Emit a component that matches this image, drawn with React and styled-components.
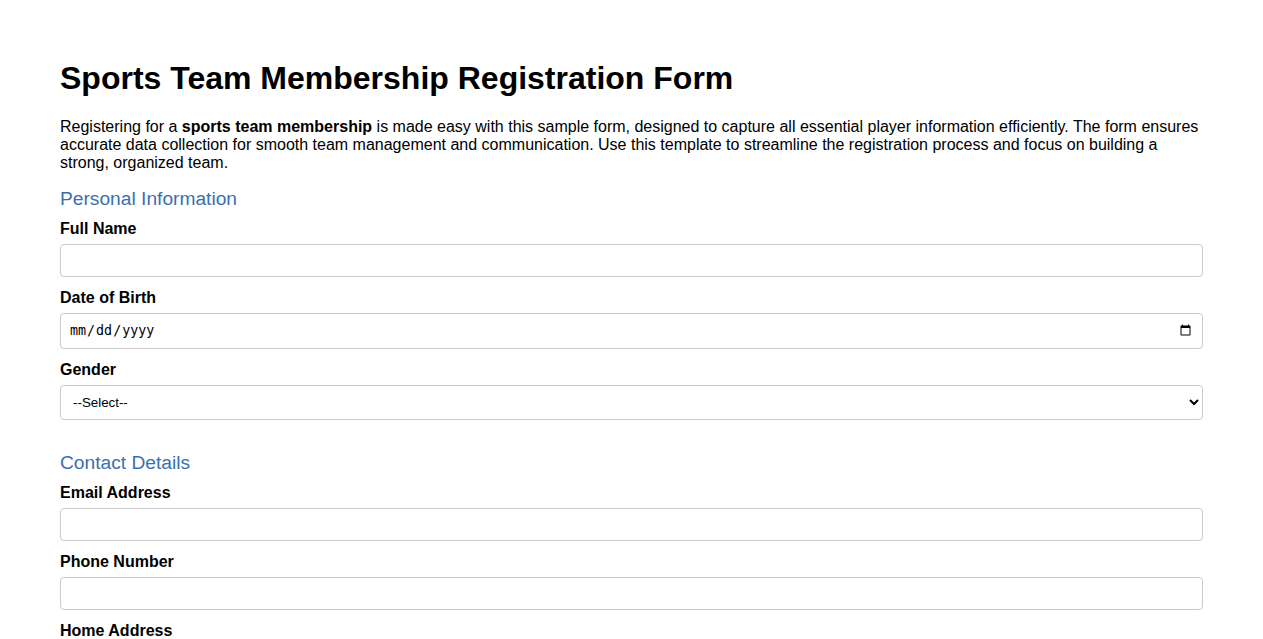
import styled, { createGlobalStyle } from "styled-components";

const GlobalStyle = createGlobalStyle`
  body {
    margin: 0;
    font-family: "Liberation Sans", Arial, sans-serif;
    color: #000;
    background: #fff;
  }
`;

const Page = styled.main`
  padding: 40px 60px;
`;

const Title = styled.h1`
  font-size: 32px;
  margin: 20px 0 21px;
`;

const Intro = styled.p`
  font-size: 16px;
  margin: 16px 0;
`;

const Section = styled.section`
  margin-bottom: 32px;
`;

const SectionTitle = styled.h3`
  font-size: 19.2px;
  font-weight: normal;
  color: #3a70b0;
  margin: 0 0 10px;
`;

const Label = styled.label`
  display: block;
  font-weight: bold;
  font-size: 16px;
  margin-bottom: 6px;
`;

const Field = styled.input`
  display: block;
  width: 100%;
  box-sizing: border-box;
  padding: 8px;
  margin-bottom: 12px;
  border: 1px solid #ccc;
  border-radius: 4px;
  background: #fff;

  &[type="date"] {
    height: 36px;
  }
`;

const Select = styled.select`
  display: block;
  width: 100%;
  box-sizing: border-box;
  padding: 8px;
  margin-bottom: 12px;
  border: 1px solid #ccc;
  border-radius: 4px;
  background: #fff;
  font-family: "Liberation Sans", Arial, sans-serif;
`;

const TextArea = styled.textarea`
  display: block;
  width: 100%;
  box-sizing: border-box;
  padding: 8px;
  margin-bottom: 12px;
  border: 1px solid #ccc;
  border-radius: 4px;
  height: 70px;
`;

const App = () => {
  return (
    <>
      <GlobalStyle />
      <Page>
        <Title>Sports Team Membership Registration Form</Title>
        <Intro>
          Registering for a <strong>sports team membership</strong> is made easy with this sample form, designed to capture all essential player information efficiently. The form ensures accurate data collection for smooth team management and communication. Use this template to streamline the registration process and focus on building a strong, organized team.
        </Intro>

        <form>
          <Section>
            <SectionTitle>Personal Information</SectionTitle>
            <Label htmlFor="fullname">Full Name</Label>
            <Field id="fullname" type="text" />
            <Label htmlFor="dob">Date of Birth</Label>
            <Field id="dob" type="date" />
            <Label htmlFor="gender">Gender</Label>
            <Select id="gender" defaultValue="">
              <option value="">--Select--</option>
              <option>Male</option>
              <option>Female</option>
              <option>Other</option>
            </Select>
          </Section>

          <Section>
            <SectionTitle>Contact Details</SectionTitle>
            <Label htmlFor="email">Email Address</Label>
            <Field id="email" type="email" />
            <Label htmlFor="phone">Phone Number</Label>
            <Field id="phone" type="tel" />
            <Label htmlFor="address">Home Address</Label>
            <TextArea id="address" />
          </Section>
        </form>
      </Page>
    </>
  );
};

export default App;
